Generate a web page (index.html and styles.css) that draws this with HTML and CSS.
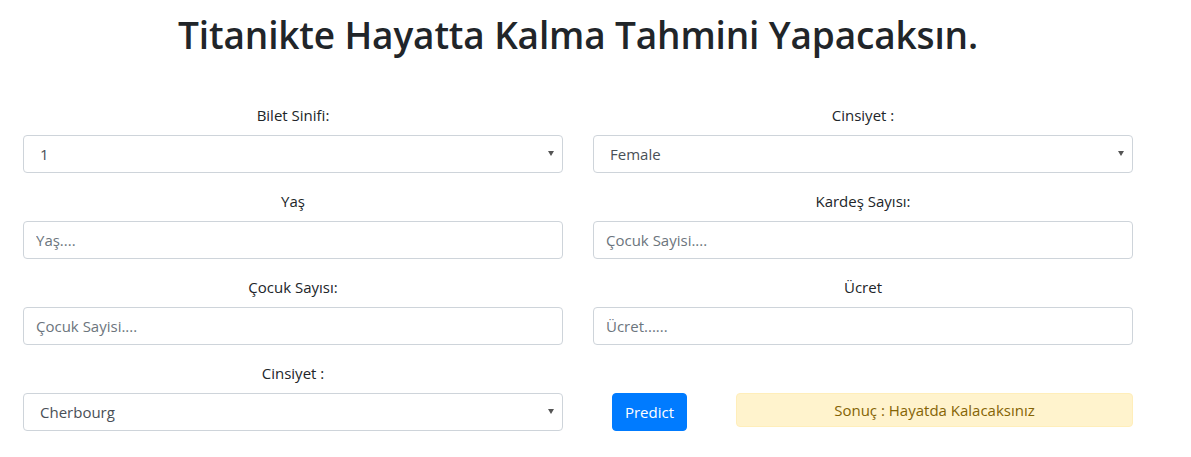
FILE: index.html
```html
<!DOCTYPE html>
<html lang="tr">
<head>
<meta charset="utf-8">
<title>Titanik</title>
<link rel="stylesheet" href="styles.css">
</head>
<body>
<div class="page">
  <h1 class="title">Titanikte Hayatta Kalma Tahmini Yapacaksın.</h1>
  <form class="form-grid">
    <div class="group">
      <label class="lbl">Bilet Sinifi:</label>
      <div class="select-wrap">
        <select class="control select-control"><option>1</option><option>2</option><option>3</option></select>
      </div>
    </div>
    <div class="group">
      <label class="lbl">Cinsiyet :</label>
      <div class="select-wrap">
        <select class="control select-control"><option>Female</option><option>Male</option></select>
      </div>
    </div>
    <div class="group">
      <label class="lbl">Yaş</label>
      <input class="control" type="text" placeholder="Yaş....">
    </div>
    <div class="group">
      <label class="lbl">Kardeş Sayısı:</label>
      <input class="control" type="text" placeholder="Çocuk Sayisi....">
    </div>
    <div class="group">
      <label class="lbl">Çocuk Sayısı:</label>
      <input class="control" type="text" placeholder="Çocuk Sayisi....">
    </div>
    <div class="group">
      <label class="lbl">Ücret</label>
      <input class="control" type="text" placeholder="Ücret......">
    </div>
    <div class="group">
      <label class="lbl">Cinsiyet :</label>
      <div class="select-wrap">
        <select class="control select-control"><option>Cherbourg</option><option>Queenstown</option><option>Southampton</option></select>
      </div>
    </div>
    <div class="group action-group">
      <button class="btn" type="button">Predict</button>
      <div class="alert">Sonuç : Hayatda Kalacaksınız</div>
    </div>
  </form>
</div>
</body>
</html>
```

FILE: styles.css
```css
* { box-sizing: border-box; }
html, body {
  margin: 0;
  background: #fff;
}
body {
  font-family: "Open Sans", "Noto Sans", "Liberation Sans", sans-serif;
  font-size: 15px;
  color: #212529;
}
.page {
  width: 1155px;
  padding: 0 22px 0 23px;
}
.title {
  margin: 0;
  padding-top: 8px;
  height: 103px;
  text-align: center;
  font-size: 37px;
  font-weight: 600;
  line-height: 54px;
  letter-spacing: -0.15px;
  color: #212529;
}
.form-grid {
  display: grid;
  grid-template-columns: 540px 540px;
  column-gap: 30px;
  margin: 0;
}
.group {
  display: flex;
  flex-direction: column;
  margin-bottom: 16px;
}
.lbl {
  display: block;
  text-align: center;
  line-height: 24px;
  height: 24px;
  margin-bottom: 8px;
}
.control {
  display: block;
  width: 100%;
  height: 38px;
  padding: 0 12px;
  font-family: inherit;
  font-size: 15px;
  color: #495057;
  background: #fff;
  border: 1px solid #ced4da;
  border-radius: 4px;
  outline: none;
}
.control::placeholder {
  color: #6c757d;
  opacity: 1;
}
.select-wrap {
  position: relative;
}
.select-control {
  -webkit-appearance: none;
  appearance: none;
  padding-left: 16px;
}
.select-wrap::after {
  content: "";
  position: absolute;
  right: 9px;
  top: 16px;
  width: 0;
  height: 0;
  border-left: 3px solid transparent;
  border-right: 3px solid transparent;
  border-top: 5px solid #555;
  pointer-events: none;
}
.action-group {
  flex-direction: row;
  align-items: flex-start;
  padding-top: 32px;
  padding-left: 19px;
}
.btn {
  width: 75px;
  height: 38px;
  padding: 0;
  border: 1px solid #007bff;
  border-radius: 4px;
  background: #007bff;
  color: #fff;
  font-family: inherit;
  font-size: 15px;
  line-height: 36px;
  cursor: pointer;
}
.alert {
  flex: 1;
  margin-left: 49px;
  height: 34px;
  line-height: 32px;
  text-align: center;
  background: #fff3cd;
  border: 1px solid #ffeeba;
  border-radius: 4px;
  color: #856404;
}
```
